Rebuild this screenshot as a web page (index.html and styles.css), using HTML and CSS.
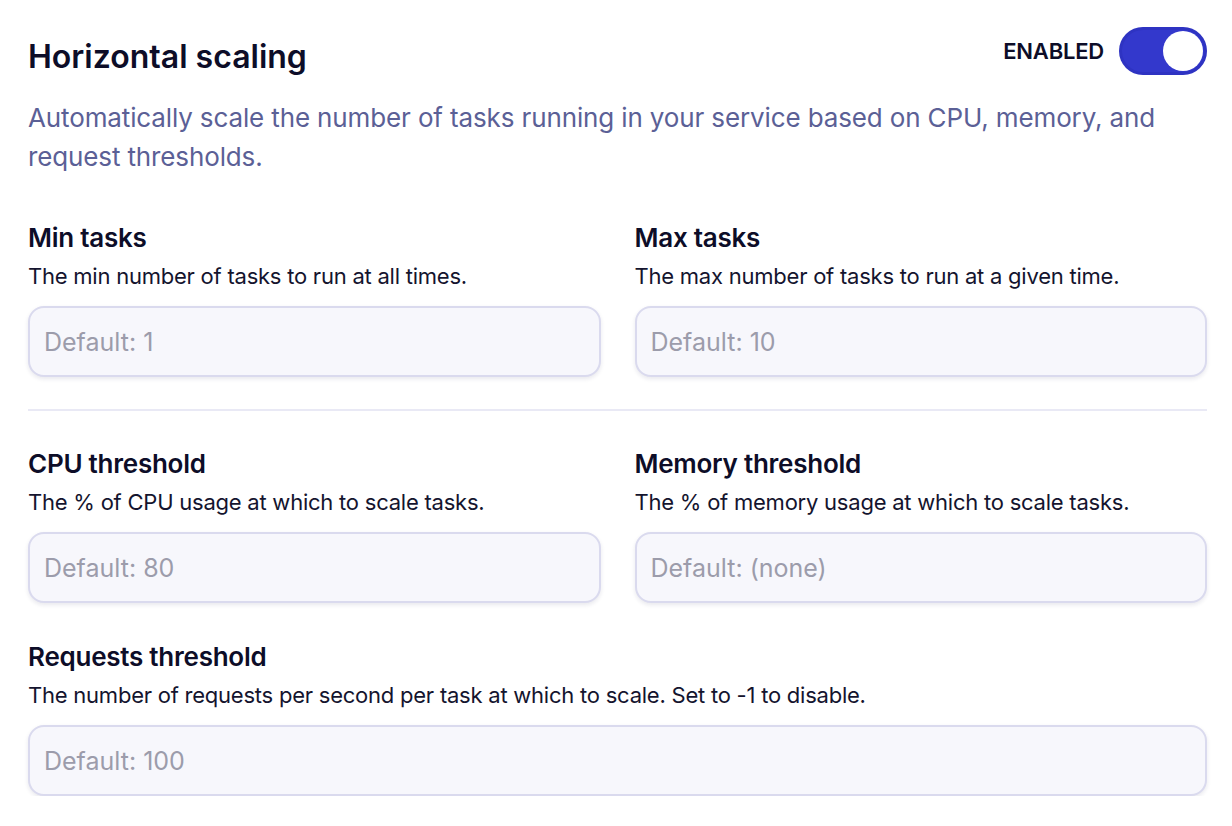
FILE: index.html
```html
<!DOCTYPE html>
<html lang="en">
<head>
<meta charset="utf-8">
<title>Horizontal scaling</title>
<link rel="stylesheet" href="styles.css">
</head>
<body>
<main class="panel">
  <header class="panel-head">
    <h1 class="title">Horizontal scaling</h1>
    <div class="toggle-wrap">
      <span class="toggle-label">ENABLED</span>
      <span class="toggle"><span class="knob"></span></span>
    </div>
  </header>
  <p class="intro">Automatically scale the number of tasks running in your service based on CPU, memory, and request thresholds.</p>

  <div class="grid first">
    <div class="field">
      <div class="label">Min tasks</div>
      <div class="help">The min number of tasks to run at all times.</div>
      <input class="input" type="text" placeholder="Default: 1">
    </div>
    <div class="field">
      <div class="label">Max tasks</div>
      <div class="help">The max number of tasks to run at a given time.</div>
      <input class="input" type="text" placeholder="Default: 10">
    </div>
  </div>

  <hr class="divider">

  <div class="grid">
    <div class="field">
      <div class="label">CPU threshold</div>
      <div class="help">The % of CPU usage at which to scale tasks.</div>
      <input class="input" type="text" placeholder="Default: 80">
    </div>
    <div class="field">
      <div class="label">Memory threshold</div>
      <div class="help">The % of memory usage at which to scale tasks.</div>
      <input class="input" type="text" placeholder="Default: (none)">
    </div>
    <div class="field full">
      <div class="label">Requests threshold</div>
      <div class="help">The number of requests per second per task at which to scale. Set to -1 to disable.</div>
      <input class="input" type="text" placeholder="Default: 100">
    </div>
  </div>
</main>
</body>
</html>
```

FILE: styles.css
```css
* { box-sizing: border-box; }
html, body { margin: 0; padding: 0; background: #ffffff; }
body {
  font-family: Inter, "Noto Sans", "Liberation Sans", sans-serif;
  color: #0f0f2a;
}
.panel {
  padding: 27px 25px 0 28px;
}
.panel-head {
  display: flex;
  justify-content: space-between;
  align-items: flex-start;
}
.title {
  margin: 10px 0 0 0;
  font-size: 32px;
  line-height: 40px;
  font-weight: 600;
  letter-spacing: 0;
  color: #0d0d28;
}
.toggle-wrap {
  display: flex;
  align-items: center;
  gap: 15px;
}
.toggle-label {
  font-size: 22px;
  font-weight: 600;
  letter-spacing: -0.2px;
  color: #0d0d28;
}
.toggle {
  width: 88px;
  height: 48px;
  border-radius: 24px;
  background: #3338cc;
  box-shadow: inset 0 0 0 3px rgba(20, 20, 120, 0.12);
  display: flex;
  align-items: center;
  justify-content: flex-end;
  padding: 4px;
}
.knob {
  width: 40px;
  height: 40px;
  border-radius: 50%;
  background: #ffffff;
}
.intro {
  margin: 21px 0 0 0;
  font-size: 26px;
  line-height: 39px;
  letter-spacing: -0.13px;
  color: #5b6096;
  max-width: 1160px;
}
.grid {
  display: grid;
  grid-template-columns: 1fr 1fr;
  column-gap: 34px;
  row-gap: 38px;
}
.grid.first { margin-top: 46px; }
.field.full { grid-column: 1 / -1; }
.label {
  font-size: 26px;
  line-height: 32px;
  font-weight: 600;
  letter-spacing: -0.25px;
  color: #0d0d28;
}
.help {
  margin-top: 7px;
  font-size: 22px;
  line-height: 30px;
  letter-spacing: -0.23px;
  color: #14142e;
}
.input {
  display: block;
  width: 100%;
  height: 71px;
  margin-top: 15px;
  padding: 0 14px;
  border: 2px solid #dadaee;
  border-radius: 16px;
  background: #f7f7fc;
  font-family: inherit;
  font-size: 25px;
  color: #0d0d28;
  box-shadow: 0 2px 4px rgba(30, 30, 80, 0.10);
  outline: none;
}
.input::placeholder { color: #9c9cab; }
.divider {
  border: 0;
  border-top: 2px solid #e9e9f5;
  margin: 32px 0 37px 0;
}
```
